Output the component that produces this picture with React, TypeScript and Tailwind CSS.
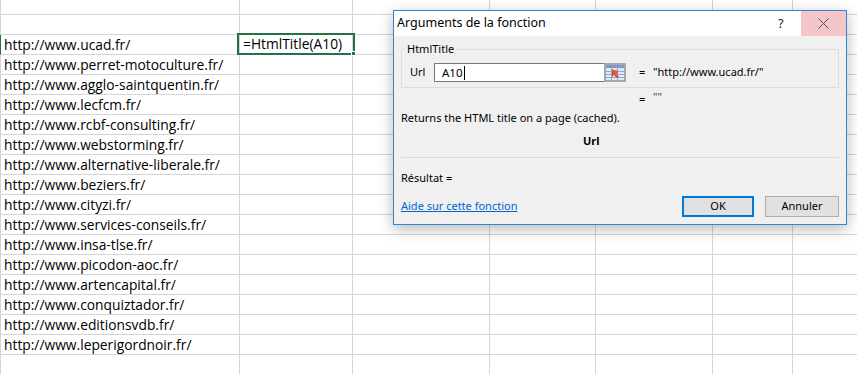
import React from "react";

const urls = [
  "http://www.ucad.fr/",
  "http://www.perret-motoculture.fr/",
  "http://www.agglo-saintquentin.fr/",
  "http://www.lecfcm.fr/",
  "http://www.rcbf-consulting.fr/",
  "http://www.webstorming.fr/",
  "http://www.alternative-liberale.fr/",
  "http://www.beziers.fr/",
  "http://www.cityzi.fr/",
  "http://www.services-conseils.fr/",
  "http://www.insa-tlse.fr/",
  "http://www.picodon-aoc.fr/",
  "http://www.artencapital.fr/",
  "http://www.conquiztador.fr/",
  "http://www.editionsvdb.fr/",
  "http://www.leperigordnoir.fr/",
];

const rows: string[] = ["", "", ...urls, "", ""];

function Row({ text, first, idx }: { text: string; first: boolean; idx: number }) {
  const h = first ? "h-[15px]" : "h-[20px]";
  const selected = idx === 2;
  return (
    <div className={`flex ${h} border-b border-[#d4d4d4] border-l ${selected ? "border-l-[#217346]" : "border-l-[#d4d4d4]"}`}>
      <div className="w-[239px] shrink-0 border-r border-[#d4d4d4] flex items-end pl-[3px] leading-[18px] whitespace-nowrap text-black">
        {text}
      </div>
      <div className="w-[113px] shrink-0 border-r border-[#d4d4d4]" />
      <div className="w-[137px] shrink-0 border-r border-[#d4d4d4]" />
      <div className="w-[106px] shrink-0 border-r border-[#d4d4d4]" />
      <div className="w-[117px] shrink-0 border-r border-[#d4d4d4]" />
      <div className="w-[80px] shrink-0 border-r border-[#d4d4d4]" />
      <div className="flex-1" />
    </div>
  );
}

function RefIcon() {
  return (
    <svg width="18" height="15" viewBox="0 0 18 15">
      <rect x="0" y="0" width="18" height="15" fill="#dfe9f5" />
      <rect x="0" y="0" width="18" height="3" fill="#7d9cc4" />
      <g stroke="#8fa9cc" strokeWidth="1">
        <line x1="0" y1="6.5" x2="18" y2="6.5" />
        <line x1="0" y1="9.5" x2="18" y2="9.5" />
        <line x1="0" y1="12.5" x2="18" y2="12.5" />
        <line x1="5.5" y1="3" x2="5.5" y2="15" />
        <line x1="11.5" y1="3" x2="11.5" y2="15" />
      </g>
      <path d="M6 4 L12 7 L10 9 L13 12 L11 13 L8 10 L6 12 Z" fill="#d9472b" />
      <rect x="7" y="5" width="5" height="5" fill="#e0663f" opacity="0.7" />
    </svg>
  );
}

function Dialog() {
  return (
    <div
      className="absolute left-[393px] top-[10px] w-[454px] h-[215px] border border-[#2b88d8] bg-[#f0f0f0] shadow-[0_4px_14px_rgba(0,0,0,0.28)] flex flex-col text-[11px] text-black"
      style={{ fontFamily: '"Noto Sans", "Open Sans", sans-serif' }}
    >
      <div className="h-[25px] bg-white flex items-center shrink-0">
        <div className="pl-[3px] flex-1 text-[12.5px]">Arguments de la fonction</div>
        <div className="w-[23px] text-[13px] text-[#222]">?</div>
        <div className="w-[45px] h-full bg-[#f5c5c9] flex items-center justify-center">
          <svg width="11" height="11" viewBox="0 0 11 11">
            <path d="M0.5 0.5 L10.5 10.5 M10.5 0.5 L0.5 10.5" stroke="#555" strokeWidth="1" />
          </svg>
        </div>
      </div>
      <div className="flex flex-col px-[7px] flex-1">
        <div className="relative mt-[13px] h-[39px] border border-[#dcdcdc] pt-[13px] pl-[8px] shrink-0">
          <div className="absolute -top-[9px] left-[3px] px-[2px] bg-[#f0f0f0] leading-[16px]">HtmlTitle</div>
          <div className="flex items-center h-[19px]">
            <div className="w-[24px]">Url</div>
            <div className="w-[170px] h-[19px] bg-white border border-[#7a7a7a] border-r-0 flex items-center pl-[7px] text-[11.5px]">
              A10<span className="inline-block w-px h-[14px] bg-black ml-[1px]" />
            </div>
            <div className="w-[22px] h-[19px] border-2 border-[#a7a7a7] bg-[#dfe9f5] flex items-center justify-center overflow-hidden">
              <RefIcon />
            </div>
            <div className="ml-[13px] w-[14px]">=</div>
            <div>"http://www.ucad.fr/"</div>
          </div>
        </div>
        <div className="flex h-[18px] mt-[2px] items-center">
          <div className="ml-[238px] w-[14px]">=</div>
          <div className="text-[#1f4e79] leading-none -mt-[6px]">""</div>
        </div>
        <div className="mt-[1px] h-[18px] flex items-center">Returns the HTML title on a page (cached).</div>
        <div className="mt-[5px] h-[18px] flex items-center font-bold pl-[182px]">Url</div>
        <div className="mt-[7px] border-t border-[#d9d9d9]" />
        <div className="mt-[11px] h-[18px] flex items-center">Résultat =</div>
        <div className="mt-[9px] flex items-center">
          <a className="text-[#0066cc] underline flex-1 cursor-pointer">Aide sur cette fonction</a>
          <button className="w-[72px] h-[21px] bg-[#e1e1e1] border-2 border-[#0078d7] flex items-center justify-center">
            OK
          </button>
          <button className="ml-[11px] w-[74px] h-[21px] bg-[#e1e1e1] border border-[#adadad] flex items-center justify-center">
            Annuler
          </button>
        </div>
      </div>
    </div>
  );
}

export default function App() {
  return (
    <div
      className="relative w-[857px] h-[374px] bg-white overflow-hidden text-[13.8px]"
      style={{ fontFamily: '"Open Sans", "Liberation Sans", sans-serif' }}
    >
      <div className="flex flex-col">
        {rows.map((t, i) => (
          <Row key={i} text={t} first={i === 0} idx={i} />
        ))}
      </div>
      <div className="absolute left-[237px] top-[33px] w-[118px] h-[22px] border-2 border-[#217346] flex items-end pl-[4px] leading-[18px] whitespace-nowrap">
        =HtmlTitle(A10)
      </div>
      <div className="absolute left-[351px] top-[51px] w-[5px] h-[5px] bg-[#217346] border border-white" />
      <Dialog />
    </div>
  );
}
